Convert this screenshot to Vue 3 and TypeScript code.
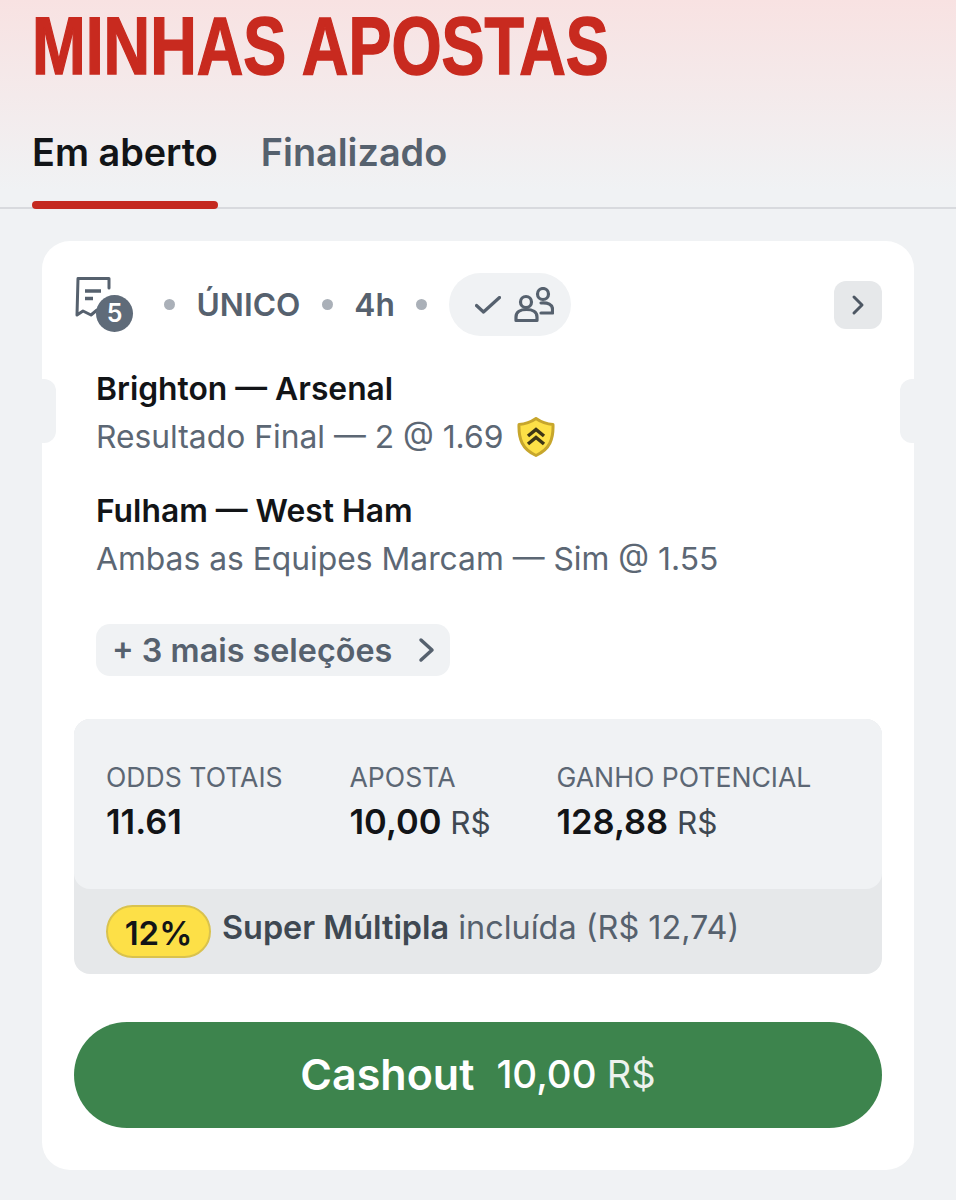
<script setup lang="ts">
interface Selection {
  match: string;
  market: string;
  boosted?: boolean;
}

const selections: Selection[] = [
  { match: "Brighton — Arsenal", market: "Resultado Final — 2 @ 1.69", boosted: true },
  { match: "Fulham — West Ham", market: "Ambas as Equipes Marcam — Sim @ 1.55" },
];
</script>

<template>
  <div class="page">
    <header class="top">
      <h1 class="title">MINHAS APOSTAS</h1>
      <nav class="tabs">
        <div class="tab active">Em aberto</div>
        <div class="tab">Finalizado</div>
      </nav>
    </header>

    <section class="card">
      <span class="notch left"></span>
      <span class="notch right"></span>

      <div class="head">
        <span class="bet-icon">
          <svg width="40" height="44" viewBox="0 0 40 44" fill="none">
            <path d="M34 14V4.500H3L2 41L8 37L16 41L22 36" stroke="#56616e" stroke-width="3" stroke-linejoin="round" stroke-linecap="round" />
            <path d="M10 17H26M10 24.500H18" stroke="#56616e" stroke-width="3.500" />
          </svg>
          <span class="count">5</span>
        </span>
        <span class="dot first"></span>
        <span class="head-text">ÚNICO</span>
        <span class="dot"></span>
        <span class="head-text">4h</span>
        <span class="dot"></span>
        <span class="pill">
          <svg width="26" height="18" viewBox="0 0 26 18" fill="none">
            <path d="M1.500 9.500L8.500 16L24.500 1.500" stroke="#56616e" stroke-width="3.200" stroke-linecap="round" stroke-linejoin="round" />
          </svg>
          <svg width="40" height="36" viewBox="0 0 40 36" fill="none">
            <circle cx="12" cy="15" r="5.500" stroke="#56616e" stroke-width="3.200" />
            <circle cx="29" cy="7" r="5.500" stroke="#56616e" stroke-width="3.200" />
            <path d="M2 33.500V30C2 25 6.500 22.500 12.500 22.500S23 25 23 30V33.500Z" stroke="#56616e" stroke-width="3.200" stroke-linejoin="round" />
            <path d="M27 16C34 15.500 38.500 17.500 38.500 22V26H27" stroke="#56616e" stroke-width="3.200" stroke-linecap="round" stroke-linejoin="round" />
          </svg>
        </span>
        <span class="open-btn">
          <svg width="16" height="22" viewBox="0 0 16 22" fill="none">
            <path d="M4 3L12 11L4 19" stroke="#4d5763" stroke-width="3" stroke-linecap="round" stroke-linejoin="round" />
          </svg>
        </span>
      </div>

      <div class="selections">
        <div v-for="item in selections" :key="item.match" class="selection">
          <div class="match">{{ item.match }}</div>
          <div class="market">
            {{ item.market }}
            <svg v-if="item.boosted" class="shield" width="38" height="40" viewBox="0 0 38 40">
              <path d="M19 1.500C24 5 29 7 36 7.500C36.500 22 33 32 19 38.500C5 32 1.500 22 2 7.500C9 7 14 5 19 1.500Z" fill="#fde047" stroke="#c7a62c" stroke-width="3" stroke-linejoin="round" />
              <path d="M11 19L19 12.500L27 19M11 27L19 20.500L27 27" fill="none" stroke="#3d3516" stroke-width="3.500" />
            </svg>
          </div>
        </div>
      </div>

      <div class="more">
        <span>+ 3 mais seleções</span>
        <svg width="18" height="26" viewBox="0 0 18 26" fill="none">
          <path d="M3 3L14 13L3 23" stroke="#56616e" stroke-width="3.500" stroke-linecap="round" stroke-linejoin="round" />
        </svg>
      </div>

      <div class="summary">
        <div class="stats">
          <div class="stat odds">
            <div class="label">ODDS TOTAIS</div>
            <div class="value">11.61</div>
          </div>
          <div class="stat stake">
            <div class="label">APOSTA</div>
            <div class="value">10,00 <small>R$</small></div>
          </div>
          <div class="stat">
            <div class="label">GANHO POTENCIAL</div>
            <div class="value">128,88 <small>R$</small></div>
          </div>
        </div>
        <div class="boost">
          <span class="badge">12%</span>
          <span class="boost-text"><b>Super Múltipla</b> incluída (R$ 12,74)</span>
        </div>
      </div>

      <button class="cashout">
        <span class="cash-label">Cashout</span>
        <span class="cash-value">10,00 <small>R$</small></span>
      </button>
    </section>
  </div>
</template>

<style>
html,
body {
  margin: 0;
  background: #f0f2f4;
}
</style>

<style scoped>
.page {
  height: 1200px;
  overflow: hidden;
  font-family: Inter, "Liberation Sans", sans-serif;
  background: linear-gradient(180deg, #f8e2e2 0, #f0f2f4 190px);
  color: #121417;
}

.top {
  height: 209px;
  box-sizing: border-box;
  border-bottom: 2px solid #d8dade;
  padding-left: 32px;
  position: relative;
}

/* no condensed face is installed, so the bold sans is squeezed to the heading's width */
.title {
  margin: 0;
  height: 122px;
  font-family: "Liberation Sans", sans-serif;
  font-size: 81px;
  line-height: 93px;
  font-weight: 700;
  color: #c82a1f;
  white-space: nowrap;
  -webkit-text-stroke: 1.500px #c82a1f;
  transform: scaleX(0.796);
  transform-origin: left top;
}

.tabs {
  display: flex;
  gap: 43px;
}

.tab {
  font-size: 37.800px;
  line-height: 60px;
  font-weight: 600;
  color: #56616e;
}

.tab.active {
  color: #121417;
  position: relative;
}

.tab.active::after {
  content: "";
  position: absolute;
  left: 0;
  right: 0;
  top: 79px;
  height: 8px;
  border-radius: 4px;
  background: #c42a20;
}

.card {
  position: relative;
  margin: 32px 42px 0;
  height: 929px;
  box-sizing: border-box;
  padding: 32px;
  background: #fff;
  border-radius: 28px;
}

.notch {
  position: absolute;
  top: 138px;
  width: 14px;
  height: 64px;
  background: #f0f2f4;
}

.notch.left {
  left: 0;
  border-radius: 0 12px 12px 0;
}

.notch.right {
  right: 0;
  border-radius: 12px 0 0 12px;
}

.head {
  display: flex;
  align-items: center;
  height: 63px;
}

.bet-icon {
  position: relative;
  width: 58px;
  height: 58px;
  flex: none;
  margin-left: 1px;
  margin-top: -4px;
}

.bet-icon svg {
  display: block;
}

.count {
  position: absolute;
  right: 0;
  bottom: 0;
  width: 37px;
  height: 37px;
  border-radius: 50%;
  background: #5f6b79;
  color: #fff;
  font-size: 25px;
  font-weight: 600;
  line-height: 37px;
  text-align: center;
}

.dot {
  width: 11px;
  height: 11px;
  border-radius: 50%;
  background: #aab0b8;
  margin: 0 21.500px;
  flex: none;
}

.dot.first {
  margin-left: 31px;
}

.head-text {
  font-size: 31.700px;
  font-weight: 600;
  color: #56616e;
}

.pill {
  display: flex;
  align-items: center;
  gap: 13px;
  width: 122px;
  height: 63px;
  box-sizing: border-box;
  padding-left: 26px;
  border-radius: 32px;
  background: #f0f2f4;
}

.open-btn {
  display: flex;
  align-items: center;
  justify-content: center;
  width: 48px;
  height: 48px;
  margin-left: auto;
  border-radius: 12px;
  background: #e6e8ea;
}

.selections {
  padding: 29px 0 0 22px;
}

.selection {
  height: 122px;
}

.match {
  font-size: 31.800px;
  line-height: 48px;
  font-weight: 600;
}

.market {
  display: flex;
  align-items: center;
  gap: 14px;
  font-size: 31.800px;
  line-height: 48px;
  color: #5c6774;
}

.more {
  display: inline-flex;
  align-items: center;
  justify-content: space-between;
  box-sizing: border-box;
  width: 354px;
  height: 52px;
  margin: 15px 0 0 22px;
  padding: 0 14px 0 16px;
  border-radius: 14px;
  background: #f0f2f4;
  color: #56616e;
  font-size: 32.300px;
  font-weight: 600;
}

.summary {
  margin-top: 43px;
  height: 255px;
  border-radius: 16px;
  background: #e6e8ea;
  overflow: hidden;
}

.stats {
  display: flex;
  height: 170px;
  box-sizing: border-box;
  padding: 40px 0 0 32px;
  background: #f0f2f4;
  border-radius: 0 0 16px 16px;
}

.stat.odds {
  width: 243.500px;
}

.stat.stake {
  width: 207px;
}

.label {
  font-size: 26.600px;
  line-height: 36px;
  color: #5c6774;
}

.value {
  font-size: 34.500px;
  line-height: 54px;
  font-weight: 600;
}

.value small {
  font-size: 31.500px;
  font-weight: 400;
  color: #3f4852;
}

.boost {
  display: flex;
  align-items: center;
  gap: 11px;
  height: 85px;
  padding-left: 32px;
  box-sizing: border-box;
}

.badge {
  width: 105px;
  height: 53px;
  box-sizing: border-box;
  border: 2px solid #d9c24e;
  border-radius: 27px;
  background: #fde047;
  font-size: 33px;
  line-height: 52px;
  font-weight: 600;
  text-align: center;
}

.boost-text {
  font-size: 32.400px;
  color: #56616e;
  margin-top: -9px;
}

.boost-text b {
  font-weight: 600;
  color: #3f4852;
}

.cashout {
  display: flex;
  align-items: center;
  justify-content: center;
  gap: 22px;
  width: 100%;
  height: 106px;
  margin-top: 48px;
  padding: 0 0 3px;
  border: 0;
  border-radius: 53px;
  background: #3d844d;
  color: #fff;
  font-family: inherit;
}

.cash-label {
  font-size: 43px;
  font-weight: 600;
}

.cash-value {
  font-size: 38.500px;
  font-weight: 500;
}

.cash-value small {
  font-size: 38px;
  font-weight: 400;
  opacity: 0.9;
}
</style>
